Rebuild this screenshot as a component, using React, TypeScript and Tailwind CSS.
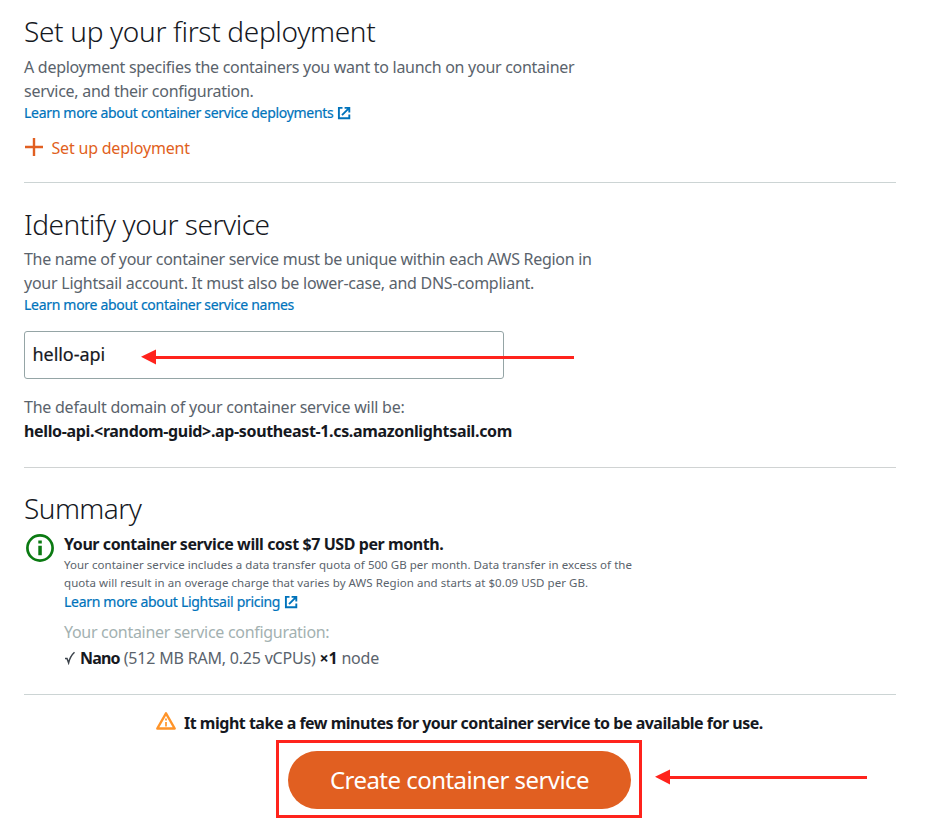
import type { ReactNode } from "react";

function Heading({ children, className }: { children: ReactNode; className: string }) {
  return <h2 className={`relative top-px text-[28px] leading-[40px] font-light text-[#16191f] ${className}`}>{children}</h2>;
}

function ExternalIcon() {
  return (
    <svg viewBox="0 0 14 14" className="ml-[4px] inline-block size-[14px] align-[-2px]" fill="none" stroke="currentColor" strokeWidth="1.9">
      <path d="M5.5 1.9H1.9v10.4h10.4V8.400" />
      <path d="M7.600 1.900h4.700v4.700M12 2.200L5 9.200" />
    </svg>
  );
}

function Link({ children, external }: { children: ReactNode; external?: boolean }) {
  return (
    <a className="block text-[14px] leading-[20px] tracking-[-0.3px] text-[#0073bb] [-webkit-text-stroke:0.2px_#0073bb]">
      {children}
      {external && <ExternalIcon />}
    </a>
  );
}

function Arrow({ className, width }: { className: string; width: number }) {
  return (
    <svg className={className} width={width} height="16" viewBox={`0 0 ${width} 16`} fill="#ff231c">
      <path d={`M0 7.8L15 0.5V7H${width}V10H15V15.5Z`} />
    </svg>
  );
}

export default function App() {
  return (
    <main className="relative h-[821px] w-[934px] overflow-hidden bg-white pt-[10px] pr-[38px] pl-6 font-['Noto_Sans',sans-serif] text-[16px] leading-[24px] tracking-[-0.28px] text-[#5a636c]">
      <section className="border-b border-[#ccd4d4] pb-[22px]">
        <Heading className="tracking-[-0.32px]">Set up your first deployment</Heading>
        <p className="mt-[5px]">
          A deployment specifies the containers you want to launch on your container
          <br />
          service, and their configuration.
        </p>
        <Link external>Learn more about container service deployments</Link>
        <button className="mt-[13px] flex h-6 items-center tracking-[-0.2px] text-[#e15f21]">
          <svg viewBox="0 0 20 20" className="mr-[7.500px] size-5 -translate-y-px" fill="none" stroke="currentColor" strokeWidth="2.400">
            <path d="M10 1v18M1 10h18" />
          </svg>
          Set up deployment
        </button>
      </section>

      <section className="border-b border-[#d0d3d3] pt-5 pb-6">
        <Heading className="tracking-[-0.47px]">Identify your service</Heading>
        <p className="mt-1">
          <span className="tracking-[-0.295px]">The name of your container service must be unique within each AWS Region in</span>
          <br />
          <span className="tracking-[-0.25px]">your Lightsail account. It must also be lower-case, and DNS-compliant.</span>
        </p>
        <Link>Learn more about container service names</Link>
        <div className="mt-4 flex h-12 w-[480px] items-center rounded-[3px] border border-[#95a5a6] px-[7.500px] pb-[2px] text-[18px] tracking-[-0.05px] text-[#16191f] [-webkit-text-stroke:0.2px_#16191f]">
          hello-api
        </div>
        <p className="mt-4 tracking-[-0.240px]">The default domain of your container service will be:</p>
        <p className="font-bold tracking-[-0.35px] text-[#16191f]">
          hello-api.&lt;random-guid&gt;.ap-southeast-1.cs.amazonlightsail.com
        </p>
      </section>

      <section className="border-b border-[#ccd4d4] pt-[19px] pb-6">
        <Heading className="tracking-[-0.55px]">Summary</Heading>
        <div className="mt-[5px] flex">
          <svg viewBox="0 0 28 28" className="mt-[2px] mr-[10px] ml-[2px] size-7 shrink-0">
            <circle cx="14" cy="14" r="12.6" fill="none" stroke="#0b7a12" strokeWidth="2.7" />
            <path d="M12.3 6.5h3.5v3h-3.5zM12.3 11.8h3.5v9.4h-3.5z" fill="#0b7a12" />
          </svg>
          <div>
            <p className="font-bold tracking-[-0.42px] text-[#16191f]">Your container service will cost $7 USD per month.</p>
            <p className="text-[11.5px] leading-[18px] tracking-[0.04px]">
              Your container service includes a data transfer quota of 500 GB per month. Data transfer in excess of the
              <br />
              <span className="tracking-[0.06px]">
                quota will result in an overage charge that varies by AWS Region and starts at $0.09 USD per GB.
              </span>
            </p>
            <Link external>Learn more about Lightsail pricing</Link>
            <p className="mt-2 tracking-[-0.3px] text-[#a3b1b1]">Your container service configuration:</p>
            <p className="mt-[2px] tracking-[-0.2px]">
              <svg viewBox="0 0 12 14" className="mr-1 inline-block h-[14px] w-3 align-[-1px]" fill="none" stroke="#3c434b" strokeWidth="1.5">
                <path d="M1 7.500h2L4.600 11.800C5.600 7.500 7.400 4 10.500 1.200" />
              </svg>
              <b className="tracking-[-0.8px] text-[#16191f]">Nano</b> (512 MB RAM, 0.25 vCPUs){" "}
              <b className="text-[#16191f]">×1</b> node
            </p>
          </div>
        </div>
      </section>

      <div className="mt-4 ml-[131px] flex h-6 items-center font-bold tracking-[-0.49px] text-[#16191f]">
        <svg viewBox="0 0 22 20" className="mr-[7px] -mt-1 h-5 w-[22px]" fill="none" stroke="#ff9429" strokeLinejoin="round">
          <path d="M11 2.300L19.700 17.500H2.300Z" strokeWidth="2.400" />
          <path d="M11 7.500v2M11 11v4.500" strokeWidth="1.700" />
        </svg>
        <p>It might take a few minutes for your container service to be available for use.</p>
      </div>
      <button className="mt-4 ml-[264px] flex h-[58px] w-[343px] items-center justify-center rounded-full bg-[#e15f21] text-[24px] tracking-[-0.54px] text-white">
        Create container service
      </button>

      <div className="absolute top-[740px] left-[276px] h-[78px] w-[366px] border-[3px] border-[#ff231c]" />
      <Arrow className="absolute top-[349px] left-[141px]" width={433} />
      <Arrow className="absolute top-[769px] left-[655px]" width={212} />
    </main>
  );
}
